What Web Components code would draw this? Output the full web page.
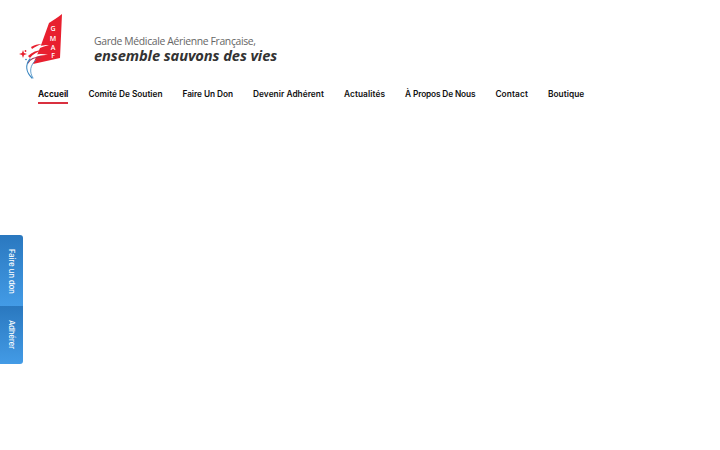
<!DOCTYPE html>
<html lang="fr">
<head>
<meta charset="utf-8">
<title>GMAF</title>
<style>
html, body { margin: 0; background: #fff; height: 100%; }
body { font-family: "Inter", "Noto Sans", sans-serif; }
</style>
</head>
<body>
<gmaf-header>
  <gmaf-logo slot="logo"></gmaf-logo>
  <gmaf-link active>Accueil</gmaf-link>
  <gmaf-link style="--ls:-.01px">Comité De Soutien</gmaf-link>
  <gmaf-link style="--ls:-.05px">Faire Un Don</gmaf-link>
  <gmaf-link style="--ls:.05px">Devenir Adhérent</gmaf-link>
  <gmaf-link style="--ls:.1px">Actualités</gmaf-link>
  <gmaf-link style="--ls:-.14px">À Propos De Nous</gmaf-link>
  <gmaf-link style="--ls:.12px">Contact</gmaf-link>
  <gmaf-link style="--ls:.05px">Boutique</gmaf-link>
</gmaf-header>
<gmaf-side>
  <gmaf-side-btn style="--h:71px;--pad:2px">Faire un don</gmaf-side-btn>
  <gmaf-side-btn style="--h:58px">Adhérer</gmaf-side-btn>
</gmaf-side>

<script>
customElements.define('gmaf-header', class extends HTMLElement {
  constructor() {
    super();
    this.attachShadow({ mode: 'open' }).innerHTML = `
<style>
:host { display: block; padding: 14px 0 0 19px; }
nav { display: flex; gap: 20px; margin: 10px 0 0 19px; }
</style>
<slot name="logo"></slot>
<nav><slot></slot></nav>`;
  }
});

customElements.define('gmaf-logo', class extends HTMLElement {
  constructor() {
    super();
    this.attachShadow({ mode: 'open' }).innerHTML = `
<style>
:host { display: flex; height: 65px; }
svg { flex: none; width: 44px; height: 65px; }
.txt { margin: 21px 0 0 31px; white-space: nowrap; }
.a { font: 400 10.400px/13px "Open Sans", sans-serif; color: #666; letter-spacing: -.35px; }
.b { font: italic 700 14.700px/15px "Open Sans", sans-serif; color: #333; letter-spacing: -.1px; }
</style>
<svg viewBox="0 0 44 65">
  <!-- tail fin -->
  <path d="M43 0C38 4 34 6 30 9L21 34 14 50 41 44Z" fill="#e8202f"/>
  <g fill="#fff" font-family="Open Sans, sans-serif" font-size="7" font-weight="600" text-anchor="middle">
    <text x="34" y="16.500">G</text><text x="34" y="26.500">M</text>
    <text x="34" y="35.500">A</text><text x="34" y="44">F</text>
  </g>
  <!-- swooshes -->
  <path d="M10 37C15 33 22 31 30 31 23 33 17 35 12 39Z" fill="#fff"/>
  <path d="M11 43C16 40 22 39 29 41 22 41 17 42 13 45Z" fill="#fff"/>
  <path d="M12 33C15 31 19 30 23 30 19 31 16 33 13 35Z" fill="#e8202f"/>
  <path d="M9 42C13 38 18 36 24 36 18 38 14 40 11 44Z" fill="#e8202f"/>
  <g fill="none" stroke-linecap="round">
    <path d="M9 49C11 45 16 43 22 43" stroke="#a03a5a" stroke-width="1.100"/>
    <path d="M13 64C7 58 6 51 11 45" stroke="#3a86c0" stroke-width="1.200"/>
    <path d="M14 64C10 58 11 51 17 46" stroke="#3a86c0" stroke-width=".8"/>
  </g>
  <path d="M4 36 5 39 8 40 5 41 4 44 3 41 0 40 3 39Z" fill="#e8202f"/>
  <circle cx="6.500" cy="37" r=".9" fill="#e8202f"/>
  <circle cx="7" cy="45.500" r=".8" fill="#2f7fb8"/>
</svg>
<div class="txt">
  <div class="a">Garde Médicale Aérienne Française,</div>
  <div class="b">ensemble sauvons des vies</div>
</div>`;
  }
});

customElements.define('gmaf-link', class extends HTMLElement {
  constructor() {
    super();
    this.attachShadow({ mode: 'open' }).innerHTML = `
<style>
:host { display: block; font: 600 8.300px/11px "Inter", sans-serif; letter-spacing: var(--ls, 0); color: #111; white-space: nowrap; padding-bottom: 2px; border-bottom: 2px solid transparent; }
:host([active]) { border-bottom-color: #d9303f; font-weight: 700; }
</style>
<slot></slot>`;
  }
});

customElements.define('gmaf-side', class extends HTMLElement {
  constructor() {
    super();
    this.attachShadow({ mode: 'open' }).innerHTML = `
<style>
:host { position: absolute; left: 0; top: 235px; width: 23px; display: flex; flex-direction: column; border-radius: 0 3px 3px 0; overflow: hidden; }
</style>
<slot></slot>`;
  }
});

customElements.define('gmaf-side-btn', class extends HTMLElement {
  constructor() {
    super();
    this.attachShadow({ mode: 'open' }).innerHTML = `
<style>
:host { display: flex; align-items: center; justify-content: center; height: var(--h); background: linear-gradient(#2a78bf, #439be6); color: #fff; font: 500 7.600px/1 "Inter", sans-serif; }
span { writing-mode: vertical-rl; white-space: nowrap; padding-top: var(--pad, 0); }
</style>
<span><slot></slot></span>`;
  }
});
</script>
</body>
</html>
